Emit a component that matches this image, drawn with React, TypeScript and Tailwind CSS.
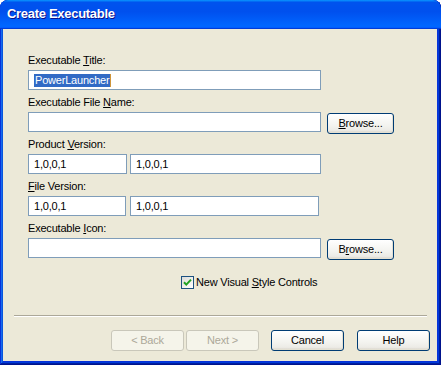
import React from 'react';

const Field = ({ className, children }: { className: string; children?: React.ReactNode }) => (
  <div className={`h-[20px] border border-[#7f9db9] bg-white flex items-center pl-[5px] ${className}`}>
    {children}
  </div>
);

const XpButton = ({
  className,
  disabled,
  children,
}: {
  className: string;
  disabled?: boolean;
  children: React.ReactNode;
}) => (
  <div
    className={`h-[21px] shrink-0 flex items-center justify-center rounded-[3px] border ${
      disabled
        ? 'border-[#c9c7ba] bg-[#f5f4ea] text-[#aca899]'
        : 'border-[#003c74] bg-[linear-gradient(180deg,#ffffff,#f3f3ef_60%,#ecebe6_86%,#d6d0c5)] text-black shadow-[inset_-1px_-1px_#e3e0d2]'
    } ${className}`}
  >
    {children}
  </div>
);

const Label = ({ children }: { children: React.ReactNode }) => (
  <div className="h-[13px] leading-[13px] mb-[3px]">{children}</div>
);

export default function App() {
  return (
    <div className="w-[441px] h-[365px] flex flex-col rounded-t-[8px] overflow-hidden bg-[#0831d9] shadow-[inset_-1px_-1px_#00138c,inset_1px_1px_#0831d9,inset_-2px_-2px_#001ea0,inset_2px_2px_#166aee,inset_-3px_-3px_#003bda,inset_3px_3px_#0855dd] font-['Liberation_Sans',Arial,sans-serif] text-[11px] tracking-[-0.2px] text-black">
      {/* Title bar */}
      <div className="h-[29px] shrink-0 flex items-center pl-[7px] pb-[1px] rounded-t-[8px] bg-[linear-gradient(180deg,#0997ff,#0053ee_8%,#0050ee_40%,#0066ff_88%,#0066ff_93%,#005bff_95%,#003dd7_96%,#003dd7)]">
        <span className="text-white font-bold text-[13px] tracking-[-0.3px] [text-shadow:1px_1px_#0f1089]">
          Create Executable
        </span>
      </div>

      {/* Client area */}
      <div className="flex-1 ml-[3px] mr-[4px] mb-[4px] bg-[#ece9d8] flex flex-col">
        <div className="pt-[25px] pl-[25px] flex flex-col gap-[6px]">
          <div>
            <Label>
              Executable <u className="underline-offset-[1px]">T</u>itle:
            </Label>
            <Field className="w-[293px]">
              <span className="bg-[#316ac5] text-white h-[13px] leading-[13px] pl-[1px] pr-[1px]">PowerLauncher</span>
              <span className="w-[1px] h-[13px] bg-[#cf953a]" />
            </Field>
          </div>

          <div>
            <Label>
              Executable File <u className="underline-offset-[1px]">N</u>ame:
            </Label>
            <div className="flex items-start gap-[6px] h-[20px]">
              <Field className="w-[293px]" />
              <XpButton className="w-[67px] mt-[1px]">
                <span>
                  <u className="underline-offset-[1px]">B</u>rowse...
                </span>
              </XpButton>
            </div>
          </div>

          <div>
            <Label>
              Product <u className="underline-offset-[1px]">V</u>ersion:
            </Label>
            <div className="flex gap-[3px]">
              <Field className="w-[99px]">1,0,0,1</Field>
              <Field className="w-[191px]">1,0,0,1</Field>
            </div>
          </div>

          <div>
            <Label>
              <u className="underline-offset-[1px]">F</u>ile Version:
            </Label>
            <div className="flex gap-[4px]">
              <Field className="w-[98px]">1,0,0,1</Field>
              <Field className="w-[189px]">1,0,0,1</Field>
            </div>
          </div>

          <div>
            <Label>
              Executable <u className="underline-offset-[1px]">I</u>con:
            </Label>
            <div className="flex items-start gap-[6px] h-[20px]">
              <Field className="w-[293px]" />
              <XpButton className="w-[67px] mt-[1px]">
                <span>
                  B<u className="underline-offset-[1px]">r</u>owse...
                </span>
              </XpButton>
            </div>
          </div>
        </div>

        {/* Checkbox */}
        <div className="mt-[18px] ml-[178px] flex items-center gap-[2px] h-[13px]">
          <div className="w-[13px] h-[13px] border border-[#1c5180] bg-[linear-gradient(135deg,#dcdcd7,#ffffff)] flex items-center justify-center">
            <svg width="9" height="9" viewBox="0 0 9 9">
              <path d="M1 4.2 L3.3 6.6 L8 1.6" fill="none" stroke="#21a121" strokeWidth="2" />
            </svg>
          </div>
          <span className="leading-[13px]">
            New Visual <u className="underline-offset-[1px]">S</u>tyle Controls
          </span>
        </div>

        {/* Separator */}
        <div className="mt-[26px] ml-[11px] mr-[10px] border-t border-[#aca899] border-b border-b-white" />

        {/* Buttons */}
        <div className="mt-[13px] flex justify-end pr-[7px]">
          <XpButton className="w-[73px]" disabled>
            &lt; Back
          </XpButton>
          <XpButton className="w-[73px] ml-[2px]" disabled>
            Next &gt;
          </XpButton>
          <XpButton className="w-[73px] ml-[12px]">Cancel</XpButton>
          <XpButton className="w-[73px] ml-[13px]">Help</XpButton>
        </div>
      </div>
    </div>
  );
}
